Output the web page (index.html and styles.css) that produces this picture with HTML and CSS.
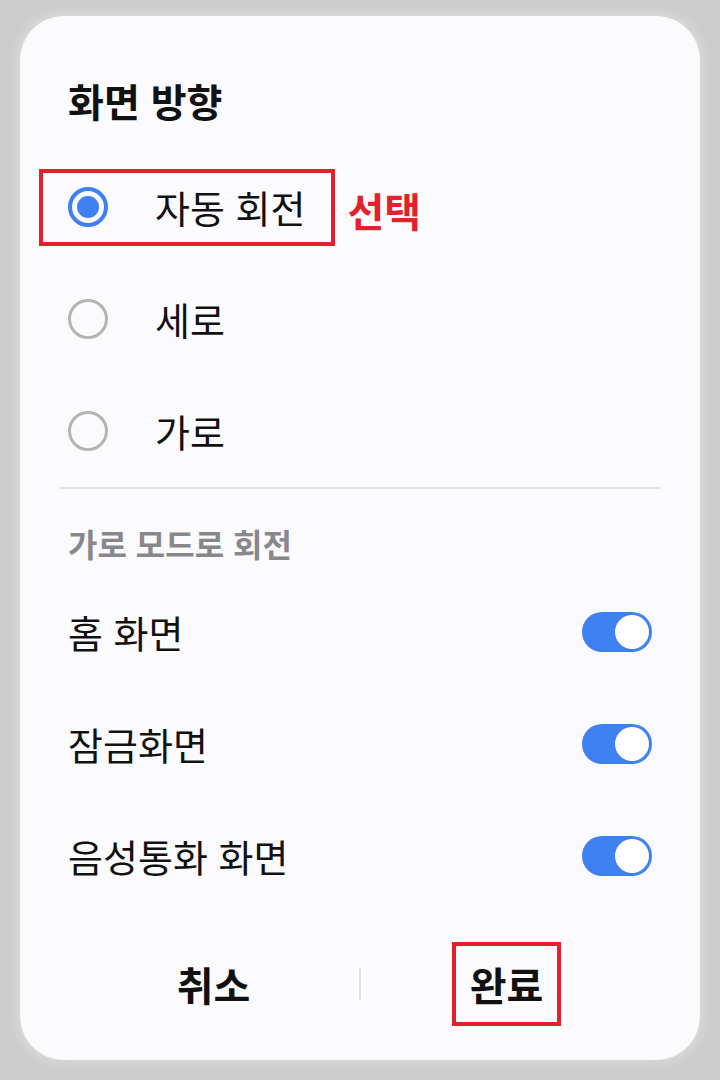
FILE: index.html
```html
<!DOCTYPE html>
<html lang="ko">
<head>
    <meta charset="UTF-8">
    <meta name="viewport" content="width=device-width, initial-scale=1.0">
    <title>화면 방향</title>
    <link rel="stylesheet" href="styles.css">
</head>
<body>
    <!-- 화면 방향 다이얼로그 -->
    <div class="dialog">
        <h1 class="dialog-title">화면 방향</h1>

        <div class="option-row">
            <div class="option marked">
                <span class="radio checked"><span class="radio-dot"></span></span>
                <span class="option-label">자동 회전</span>
            </div>
            <span class="mark-text">선택</span>
        </div>

        <div class="option-row">
            <div class="option">
                <span class="radio"></span>
                <span class="option-label">세로</span>
            </div>
        </div>

        <div class="option-row">
            <div class="option">
                <span class="radio"></span>
                <span class="option-label">가로</span>
            </div>
        </div>

        <div class="divider"></div>

        <div class="section-title">가로 모드로 회전</div>

        <div class="switch-row">
            <span class="switch-label">홈 화면</span>
            <span class="switch on"><span class="switch-knob"></span></span>
        </div>

        <div class="switch-row">
            <span class="switch-label">잠금화면</span>
            <span class="switch on"><span class="switch-knob"></span></span>
        </div>

        <div class="switch-row">
            <span class="switch-label">음성통화 화면</span>
            <span class="switch on"><span class="switch-knob"></span></span>
        </div>

        <div class="button-bar">
            <div class="button-cell">
                <span class="dialog-btn">취소</span>
            </div>
            <div class="button-sep"></div>
            <div class="button-cell">
                <span class="dialog-btn marked">완료</span>
            </div>
        </div>
    </div>
</body>
</html>
```

FILE: styles.css
```css
:root {
    --accent: #3f80f2;
    --mark: #e3202b;
    --text: #111111;
    --sub-text: #88888c;
    --off-gray: #b4b4b4;
    --line: #e2e2e4;
}

body {
    margin: 0;
    background-color: #cdcdcd;
    font-family: "Noto Sans CJK KR", "Noto Sans", sans-serif;
    color: var(--text);
}

.dialog {
    margin: 16px 20px;
    height: 1044px;
    box-sizing: border-box;
    padding-top: 60px;
    background-color: #fbfbfd;
    border-radius: 44px;
    box-shadow: 0 0 10px 4px rgba(222, 222, 222, 0.7);
    display: flex;
    flex-direction: column;
}

.dialog-title {
    margin: 0 0 27px;
    padding: 0 48px;
    font-size: 39px;
    font-weight: bold;
    line-height: 48px;
}

.option-row {
    height: 112px;
    padding-left: 19px;
    display: flex;
    align-items: center;
}

.option {
    height: 77px;
    box-sizing: border-box;
    padding: 0 26px 0 25px;
    border: 4px solid transparent;
    display: flex;
    align-items: center;
    gap: 47px;
}

.option.marked {
    border-color: var(--mark);
}

.radio {
    width: 40px;
    height: 40px;
    box-sizing: border-box;
    border: 3px solid var(--off-gray);
    border-radius: 50%;
    display: flex;
    align-items: center;
    justify-content: center;
}

.radio.checked {
    border: 4px solid var(--accent);
}

.radio-dot {
    width: 22px;
    height: 22px;
    border-radius: 50%;
    background-color: var(--accent);
}

.option-label {
    font-size: 38px;
    line-height: 48px;
}

.mark-text {
    margin-left: 12px;
    margin-top: 6px;
    font-size: 40px;
    font-weight: bold;
    color: var(--mark);
}

.divider {
    height: 2px;
    margin: 0 40px;
    background-color: var(--line);
}

.section-title {
    margin: 34px 0 13px;
    padding: 0 48px;
    font-size: 32px;
    font-weight: bold;
    line-height: 40px;
    color: var(--sub-text);
}

.switch-row {
    height: 112px;
    padding: 0 48px;
    display: flex;
    align-items: center;
    justify-content: space-between;
}

.switch-label {
    font-size: 38px;
    line-height: 48px;
}

.switch {
    width: 70px;
    height: 40px;
    box-sizing: border-box;
    padding: 3px;
    border-radius: 20px;
    background-color: var(--off-gray);
    display: flex;
    align-items: center;
}

.switch.on {
    background-color: var(--accent);
    justify-content: flex-end;
}

.switch-knob {
    width: 34px;
    height: 34px;
    border-radius: 50%;
    background-color: white;
}

.button-bar {
    margin-top: 30px;
    height: 84px;
    padding: 0 48px;
    display: flex;
    align-items: center;
}

.button-cell {
    flex: 1;
    display: flex;
    justify-content: center;
}

.button-sep {
    width: 2px;
    height: 32px;
    background-color: var(--line);
}

.dialog-btn {
    height: 84px;
    box-sizing: border-box;
    padding: 0 14px;
    border: 4px solid transparent;
    font-size: 40px;
    font-weight: bold;
    line-height: 76px;
}

.dialog-btn.marked {
    border-color: var(--mark);
}
```
